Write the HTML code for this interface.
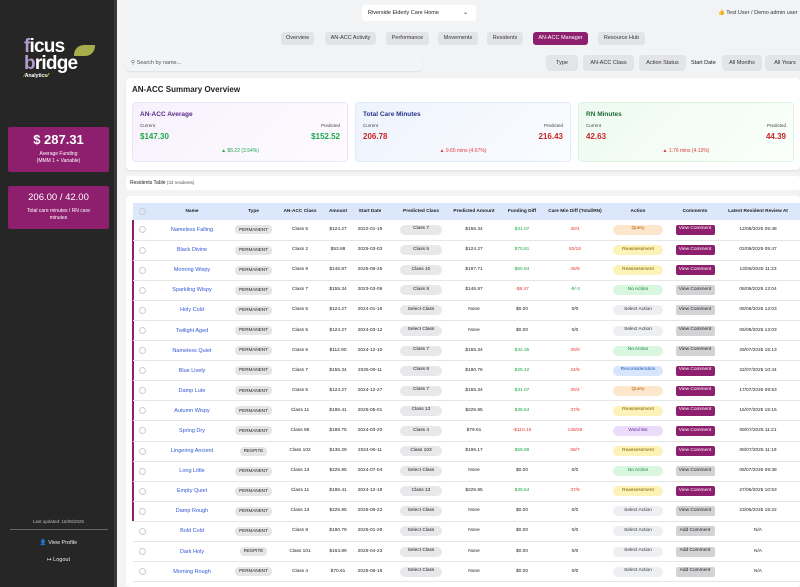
<!DOCTYPE html>
<html><head><meta charset="utf-8"><style>
*{box-sizing:border-box;margin:0;padding:0}
body{width:800px;height:587px;overflow:hidden;background:#f2f3f5;font-family:"Liberation Sans",Arial,sans-serif;position:relative;color:#222}
.abs{position:absolute}
#side{left:0;top:0;width:117px;height:587px;background:#262626;border-right:3px solid #3a3a3a}
.card{position:absolute;left:8px;width:101px;background:#8e1f6e;border-radius:2px;color:#fff;text-align:center}
.pill{position:absolute;top:32px;height:13px;border-radius:3px;background:#e3e4e8;font-size:5.5px;line-height:13px;text-align:center;color:#333}
.flt{position:absolute;top:55px;height:16px;border-radius:4px;background:#e3e4e8;font-size:5.5px;line-height:16px;text-align:center;color:#333}
.sc{position:absolute;top:102px;height:60px;border-radius:4px;border:1px solid #ece4f8}
.sc .t{position:absolute;left:7px;top:8px;font-size:6.5px;font-weight:bold}
.sc .l{position:absolute;top:20px;font-size:4.5px;color:#444}
.sc .v{position:absolute;top:29px;font-size:8px;font-weight:bold}
.sc .c{position:absolute;top:45px;left:0;right:0;text-align:center;font-size:5px}
table{position:absolute;left:133px;top:203px;border-collapse:collapse;table-layout:fixed;width:667px}
th{background:#dbe7fb;height:17px;font-size:4.8px;font-weight:bold;color:#222;vertical-align:middle}
td{height:20.1px;font-size:4.8px;line-height:10px;text-align:center;vertical-align:middle;border-bottom:1px solid #e6e6e6;color:#222;white-space:nowrap}
td.n{color:#3457d5;font-size:5.5px}
.cb{display:block;margin:0 auto;width:7px;height:7px;border:1px solid #ccc;border-radius:50%}
.ty,.pc,.ac,.cm{display:flex;align-items:center;justify-content:center;margin:0 auto;line-height:1}
.ty{width:fit-content;background:#e5e5e5;border-radius:4px;padding:0 4px;height:9px;font-size:4.6px}
.pc{background:#e8e8ea;border-radius:5px;width:42px;height:10px;font-size:4.8px}
.g{color:#1fa84a}.r{color:#e53935}
.ac{width:50px;height:10px;border-radius:5px;font-size:4.8px}
.q{background:#fde7cc;color:#b35a00}.ra{background:#fdf3b8;color:#7a6200}.na{background:#d9f6e1;color:#1a8a3a}.sa{background:#eeeff2;color:#333}.rc{background:#d7e6fd;color:#2456b5}.wl{background:#ecdcfb;color:#6b2fa8}
.cm{width:39px;height:10px;border-radius:2px;font-size:4.8px}
.vp{background:#8e1f6e;color:#fff}.vg{background:#d3d3d6;color:#222}
</style></head><body>
<div id="side" class="abs">
  <div class="abs" style="left:24px;top:38px;font-size:19px;font-weight:bold;color:#fff;line-height:17px;letter-spacing:-0.8px"><span style="color:#b49ad0">f</span>icus<br><span style="color:#b49ad0">b</span>ridge</div>
  <div class="abs" style="left:74px;top:45px;width:21px;height:11px;background:#a6ad4a;border-radius:10px 0 10px 0"></div>
  <div class="abs" style="left:24px;top:73px;font-size:5px;font-weight:bold;color:#fff"><span style="color:#c9d14a">⁄</span>Analytics<span style="color:#c9d14a">⁄⁄</span></div>
  <div class="card" style="top:127px;height:45px"><div style="font-size:13px;font-weight:bold;margin-top:5px">$ 287.31</div><div style="font-size:5px;margin-top:4px;line-height:7px">Average Funding<br>(MMM 1 + Variable)</div></div>
  <div class="card" style="top:186px;height:43px"><div style="font-size:9.5px;margin-top:6px">206.00 / 42.00</div><div style="font-size:5px;margin-top:5px;line-height:7px">Total care minutes / RN care<br>minutes</div></div>
  <div class="abs" style="left:0;width:117px;top:519px;text-align:center;font-size:4.5px;color:#bbb">Last updated: 16/08/2025</div>
  <div class="abs" style="left:10px;width:98px;top:529px;height:1px;background:#666"></div>
  <div class="abs" style="left:0;width:117px;top:540px;text-align:center;font-size:5.5px;color:#eee">👤 View Profile</div>
  <div class="abs" style="left:0;width:117px;top:557px;text-align:center;font-size:5.5px;color:#eee">↦ Logout</div>
</div>
<div class="abs" style="left:362px;top:5px;width:114px;height:16px;background:#fff;border-radius:3px;font-size:5.5px;line-height:16px;padding-left:6px">Riverside Elderly Care Home<span style="position:absolute;right:8px;font-size:6px">⌄</span></div>
<div class="abs" style="left:718px;top:10px;font-size:5.5px;color:#333;white-space:nowrap"><span style="color:#f0a030">👍</span> Test User / Demo admin user</div>
<div class="pill" style="left:281px;width:33px">Overview</div>
<div class="pill" style="left:325px;width:51px">AN-ACC Activity</div>
<div class="pill" style="left:386px;width:43px">Performance</div>
<div class="pill" style="left:438px;width:40px">Movements</div>
<div class="pill" style="left:487px;width:36px">Residents</div>
<div class="pill" style="left:533px;width:55px;background:#8e1f6e;color:#fff">AN-ACC Manager</div>
<div class="pill" style="left:598px;width:47px">Resource Hub</div>
<div class="abs" style="left:126px;top:55px;width:296px;height:16px;background:#f3f4f6;border-radius:4px;box-shadow:0 1px 1px #e2e2e4;font-size:5.5px;line-height:16px;padding-left:5px;color:#555">⚲ Search by name...</div>
<div class="flt" style="left:546px;width:32px">Type</div>
<div class="flt" style="left:583px;width:51px">AN-ACC Class</div>
<div class="flt" style="left:639px;width:47px">Action Status</div>
<div class="abs" style="left:691px;top:55px;font-size:5.5px;line-height:16px">Start Date</div>
<div class="flt" style="left:722px;width:40px">All Months</div>
<div class="flt" style="left:765px;width:40px">All Years</div>
<div class="abs" style="left:126px;top:78px;width:674px;height:92px;background:#fff;border-radius:4px;box-shadow:0 1px 2px #ddd"></div>
<div class="abs" style="left:132px;top:85px;font-size:8px;font-weight:bold">AN-ACC Summary Overview</div>
<div class="sc" style="left:132px;width:216px;background:linear-gradient(135deg,#f7f1fd,#fdfbff)"><div class="t" style="color:#5b2a86">AN-ACC Average</div><div class="l" style="left:7px">Current</div><div class="l" style="right:7px">Predicted</div><div class="v g" style="left:7px">$147.30</div><div class="v g" style="right:7px">$152.52</div><div class="c g">▲ $5.22 (3.54%)</div></div>
<div class="sc" style="left:355px;width:216px;border-color:#e1eafb;background:linear-gradient(135deg,#eef3fd,#fafcff)"><div class="t" style="color:#26368a">Total Care Minutes</div><div class="l" style="left:7px">Current</div><div class="l" style="right:7px">Predicted</div><div class="v r" style="left:7px;color:#c62828">206.78</div><div class="v" style="right:7px;color:#c62828">216.43</div><div class="c r">▲ 9.65 mins (4.67%)</div></div>
<div class="sc" style="left:578px;width:216px;border-color:#dcf3e2;background:linear-gradient(135deg,#eefaf1,#fafffb)"><div class="t" style="color:#1e6b34">RN Minutes</div><div class="l" style="left:7px">Current</div><div class="l" style="right:7px">Predicted</div><div class="v" style="left:7px;color:#c62828">42.63</div><div class="v" style="right:7px;color:#c62828">44.39</div><div class="c r">▲ 1.76 mins (4.13%)</div></div>
<div class="abs" style="left:126px;top:176px;width:674px;height:14px;background:#fff;border-radius:3px;font-size:5px;line-height:14px;padding-left:4px">Residents Table <span style="font-size:4.5px;color:#555">(33 residents)</span></div>
<div class="abs" style="left:126px;top:196px;width:674px;height:391px;background:#fff;border-radius:4px"></div>
<div class="abs" style="left:132px;top:220px;width:2px;height:301px;background:#8e1f6e"></div>
<table>
<colgroup><col style="width:18px"><col style="width:82px"><col style="width:41px"><col style="width:52px"><col style="width:24px"><col style="width:40px"><col style="width:62px"><col style="width:44px"><col style="width:52px"><col style="width:54px"><col style="width:72px"><col style="width:42px"><col style="width:84px"></colgroup>
<tr><th><span class="cb"></span></th><th>Name</th><th>Type</th><th>AN-ACC Class</th><th>Amount</th><th>Start Date</th><th>Predicted Class</th><th>Predicted Amount</th><th>Funding Diff</th><th>Care Min Diff (Total/RN)</th><th>Action</th><th>Comments</th><th>Latest Resident Review At</th></tr>
<tr><td><span class="cb"></span></td><td class="n">Nameless Falling</td><td><span class="ty">PERMANENT</span></td><td>Class 5</td><td>$124.27</td><td>2022-01-19</td><td><span class="pc">Class 7</span></td><td>$155.34</td><td class="g">$31.07</td><td class="r">30/4</td><td><span class="ac q">Query</span></td><td><span class="cm vp">View Comment</span></td><td>12/08/2025 05:48</td></tr>
<tr><td><span class="cb"></span></td><td class="n">Black Divine</td><td><span class="ty">PERMANENT</span></td><td>Class 2</td><td>$53.88</td><td>2025-03-03</td><td><span class="pc">Class 5</span></td><td>$124.27</td><td class="g">$70.81</td><td class="r">83/16</td><td><span class="ac ra">Reassessment</span></td><td><span class="cm vp">View Comment</span></td><td>02/08/2025 05:47</td></tr>
<tr><td><span class="cb"></span></td><td class="n">Morning Wispy</td><td><span class="ty">PERMANENT</span></td><td>Class 9</td><td>$146.87</td><td>2025-06-25</td><td><span class="pc">Class 10</span></td><td>$197.71</td><td class="g">$50.84</td><td class="r">45/8</td><td><span class="ac ra">Reassessment</span></td><td><span class="cm vp">View Comment</span></td><td>13/08/2025 11:23</td></tr>
<tr><td><span class="cb"></span></td><td class="n">Sparkling Wispy</td><td><span class="ty">PERMANENT</span></td><td>Class 7</td><td>$155.34</td><td>2023-03-09</td><td><span class="pc">Class 9</span></td><td>$146.87</td><td class="r">-$8.47</td><td class="g">-8/-3</td><td><span class="ac na">No Action</span></td><td><span class="cm vg">View Comment</span></td><td>08/08/2025 12:04</td></tr>
<tr><td><span class="cb"></span></td><td class="n">Holy Cold</td><td><span class="ty">PERMANENT</span></td><td>Class 5</td><td>$124.27</td><td>2024-01-18</td><td><span class="pc">Select Class</span></td><td>None</td><td>$0.00</td><td>0/0</td><td><span class="ac sa">Select Action</span></td><td><span class="cm vg">View Comment</span></td><td>08/08/2025 12:03</td></tr>
<tr><td><span class="cb"></span></td><td class="n">Twilight Aged</td><td><span class="ty">PERMANENT</span></td><td>Class 5</td><td>$124.27</td><td>2024-03-12</td><td><span class="pc">Select Class</span></td><td>None</td><td>$0.00</td><td>0/0</td><td><span class="ac sa">Select Action</span></td><td><span class="cm vg">View Comment</span></td><td>06/08/2025 12:03</td></tr>
<tr><td><span class="cb"></span></td><td class="n">Nameless Quiet</td><td><span class="ty">PERMANENT</span></td><td>Class 6</td><td>$112.90</td><td>2024-12-10</td><td><span class="pc">Class 7</span></td><td>$155.34</td><td class="g">$42.35</td><td class="r">30/0</td><td><span class="ac na">No Action</span></td><td><span class="cm vg">View Comment</span></td><td>29/07/2025 15:13</td></tr>
<tr><td><span class="cb"></span></td><td class="n">Blue Lively</td><td><span class="ty">PERMANENT</span></td><td>Class 7</td><td>$155.34</td><td>2025-06-11</td><td><span class="pc">Class 8</span></td><td>$180.76</td><td class="g">$25.42</td><td class="r">24/6</td><td><span class="ac rc">Reconsideration</span></td><td><span class="cm vp">View Comment</span></td><td>22/07/2025 10:44</td></tr>
<tr><td><span class="cb"></span></td><td class="n">Damp Lute</td><td><span class="ty">PERMANENT</span></td><td>Class 5</td><td>$124.27</td><td>2024-12-27</td><td><span class="pc">Class 7</span></td><td>$155.34</td><td class="g">$31.07</td><td class="r">30/4</td><td><span class="ac q">Query</span></td><td><span class="cm vp">View Comment</span></td><td>17/07/2025 09:53</td></tr>
<tr><td><span class="cb"></span></td><td class="n">Autumn Wispy</td><td><span class="ty">PERMANENT</span></td><td>Class 11</td><td>$186.41</td><td>2025-05-01</td><td><span class="pc">Class 13</span></td><td>$225.95</td><td class="g">$38.54</td><td class="r">37/6</td><td><span class="ac ra">Reassessment</span></td><td><span class="cm vp">View Comment</span></td><td>15/07/2025 15:15</td></tr>
<tr><td><span class="cb"></span></td><td class="n">Spring Dry</td><td><span class="ty">PERMANENT</span></td><td>Class 96</td><td>$188.75</td><td>2024-03-20</td><td><span class="pc">Class 4</span></td><td>$79.61</td><td class="r">-$110.15</td><td class="r">138/28</td><td><span class="ac wl">Watchlist</span></td><td><span class="cm vp">View Comment</span></td><td>09/07/2025 11:21</td></tr>
<tr><td><span class="cb"></span></td><td class="n">Lingering Ancient</td><td><span class="ty">RESPITE</span></td><td>Class 102</td><td>$136.29</td><td>2024-06-11</td><td><span class="pc">Class 103</span></td><td>$196.17</td><td class="g">$59.88</td><td class="r">58/7</td><td><span class="ac ra">Reassessment</span></td><td><span class="cm vp">View Comment</span></td><td>08/07/2025 11:19</td></tr>
<tr><td><span class="cb"></span></td><td class="n">Long Little</td><td><span class="ty">PERMANENT</span></td><td>Class 13</td><td>$225.95</td><td>2024-07-04</td><td><span class="pc">Select Class</span></td><td>None</td><td>$0.00</td><td>0/0</td><td><span class="ac na">No Action</span></td><td><span class="cm vg">View Comment</span></td><td>08/07/2025 09:38</td></tr>
<tr><td><span class="cb"></span></td><td class="n">Empty Quiet</td><td><span class="ty">PERMANENT</span></td><td>Class 11</td><td>$186.41</td><td>2024-12-18</td><td><span class="pc">Class 13</span></td><td>$225.95</td><td class="g">$39.54</td><td class="r">37/6</td><td><span class="ac ra">Reassessment</span></td><td><span class="cm vp">View Comment</span></td><td>27/06/2025 10:53</td></tr>
<tr><td><span class="cb"></span></td><td class="n">Damp Rough</td><td><span class="ty">PERMANENT</span></td><td>Class 13</td><td>$225.95</td><td>2025-06-22</td><td><span class="pc">Select Class</span></td><td>None</td><td>$0.00</td><td>0/0</td><td><span class="ac sa">Select Action</span></td><td><span class="cm vg">View Comment</span></td><td>23/06/2025 15:22</td></tr>
<tr><td><span class="cb"></span></td><td class="n">Bold Cold</td><td><span class="ty">PERMANENT</span></td><td>Class 8</td><td>$180.79</td><td>2025-01-29</td><td><span class="pc">Select Class</span></td><td>None</td><td>$0.00</td><td>0/0</td><td><span class="ac sa">Select Action</span></td><td><span class="cm vg">Add Comment</span></td><td>N/A</td></tr>
<tr><td><span class="cb"></span></td><td class="n">Dark Holy</td><td><span class="ty">RESPITE</span></td><td>Class 101</td><td>$163.89</td><td>2025-04-23</td><td><span class="pc">Select Class</span></td><td>None</td><td>$0.00</td><td>0/0</td><td><span class="ac sa">Select Action</span></td><td><span class="cm vg">Add Comment</span></td><td>N/A</td></tr>
<tr><td><span class="cb"></span></td><td class="n">Morning Rough</td><td><span class="ty">PERMANENT</span></td><td>Class 4</td><td>$70.61</td><td>2025-06-18</td><td><span class="pc">Select Class</span></td><td>None</td><td>$0.00</td><td>0/0</td><td><span class="ac sa">Select Action</span></td><td><span class="cm vg">Add Comment</span></td><td>N/A</td></tr>
</table>
</body></html>
